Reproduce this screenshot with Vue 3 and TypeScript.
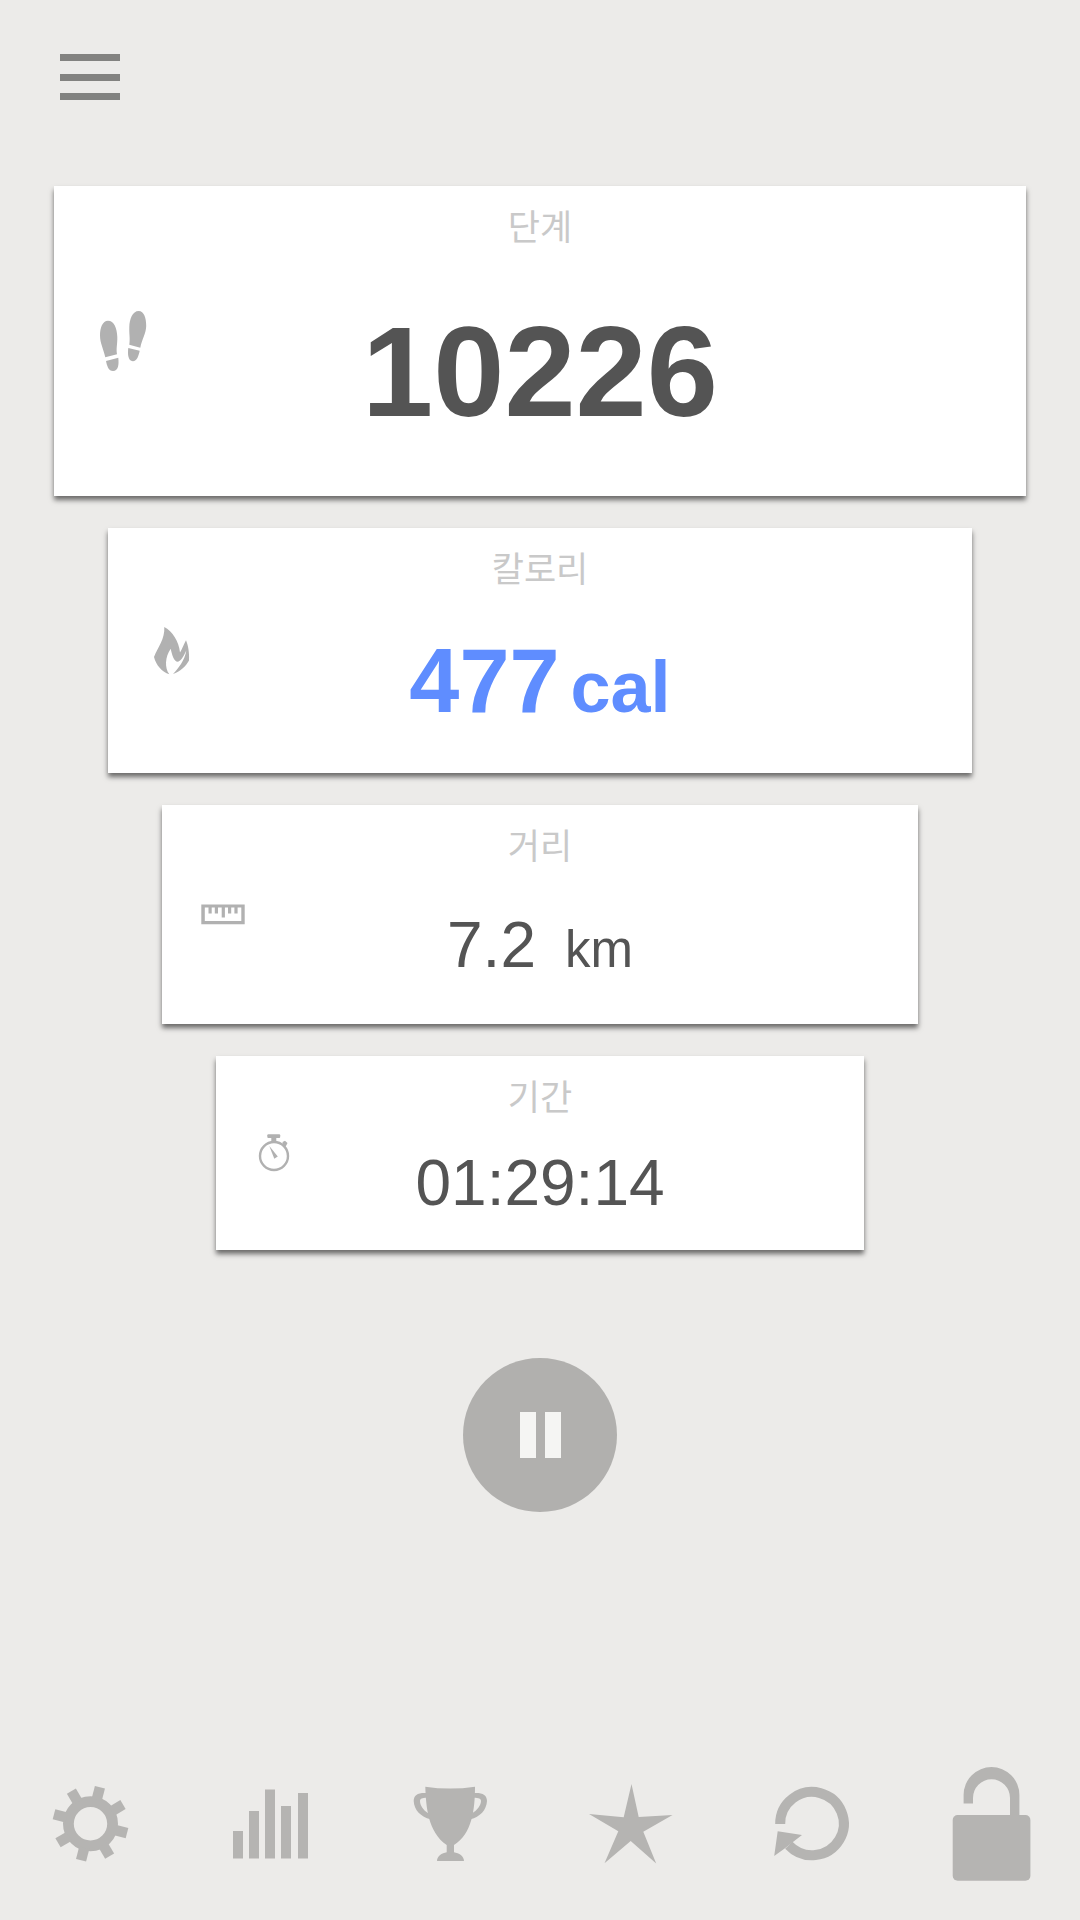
<script setup lang="ts">
import { ref } from 'vue'

type IconName = 'steps' | 'flame' | 'ruler' | 'watch'

interface Metric {
  id: string
  icon: IconName
  iconSize: number
  label: string
  value: string
  unit?: string
}

const metrics: Metric[] = [
  { id: 'steps', icon: 'steps', iconSize: 60, label: '단계', value: '10226' },
  { id: 'calories', icon: 'flame', iconSize: 48, label: '칼로리', value: '477', unit: 'cal' },
  { id: 'distance', icon: 'ruler', iconSize: 44, label: '거리', value: '7.2', unit: 'km' },
  { id: 'duration', icon: 'watch', iconSize: 38, label: '기간', value: '01:29:14' },
]

const gearTeeth = Array.from({ length: 8 }, (_, i) => 14.5 + i * 45)
const running = ref(true)
</script>

<template>
  <div class="screen">
    <header class="top">
      <button type="button" class="icon-button" aria-label="메뉴">
        <svg class="menu" viewBox="0 0 60 46" aria-hidden="true">
          <path d="M0 0H60V7H0zM0 20H60V27H0zM0 39H60V46H0z" />
        </svg>
      </button>
    </header>

    <main class="content">
      <section v-for="m in metrics" :key="m.id" class="card" :class="m.id">
        <svg
          class="card-icon"
          :width="m.iconSize"
          :height="m.iconSize"
          :viewBox="`0 0 ${m.iconSize} ${m.iconSize}`"
          aria-hidden="true"
        >
          <g v-if="m.icon === 'steps'">
            <path d="M15 9.7C9.500 9.700 7 17 7 24.500C7 32 10.500 38 12.300 46.300L24 43.300C23 37 24.500 33 24.300 26C24 17 21 9.700 15 9.700z" />
            <path d="M13 50L25.300 46.700C26 53 25.500 60 20 60C15.500 60 14 55 13 50z" />
            <path d="M45.700 0C39.500 0 36.500 8 36.300 16C36 23 37.300 27 36.300 33.700L47.300 36.700C49 28 53 23 53.200 15C53.300 7 51 0 45.700 0z" />
            <path d="M35.300 37L46.700 39.700C45.500 45 44 50 39.800 50.200C35 50 34.500 43 35.300 37z" />
          </g>
          <path
            v-else-if="m.icon === 'flame'"
            d="M17.300 0C18 12 11 20 7 30C9 38 15 45 22.300 47.300C17.500 41 18 30 23.700 21.800C25 28 27 35 31 34.800C35 33.500 37 28 39.300 23.500C38 33 31 42 26 47C33 45 39 39 42 33.500C42.500 25 41 18 39 13.200C37 17 35 22 33 25.500C32 14 25 4 17.300 0z"
          />
          <g v-else-if="m.icon === 'ruler'">
            <path fill-rule="evenodd" d="M.3 11.500H43.700V31.300H.3zM3.800 14.500V28H40.300V14.500z" />
            <path d="M7.500 14h3.200v6.500H7.500zM13.800 14h3.200v6.500h-3.200zM20.700 14h3.200v10.500h-3.200zM27 14h3.200v6.500H27zM33.400 14h3.200v6.500h-3.200z" />
          </g>
          <g v-else>
            <circle cx="19" cy="22" r="14" fill="none" stroke="#b1b1b1" stroke-width="2.400" />
            <rect x="12.300" y=".2" width="12.900" height="3.800" rx="1" />
            <path d="M16.300 4H21.300V8H16.300z" />
            <path d="M27.500 8L30 6.800L32.500 9L31.500 11L30.300 13L27.800 10.800z" />
            <path d="M14.300 12L22.800 22.600L19.300 24.800z" />
          </g>
        </svg>
        <div class="card-body">
          <h2 class="label">{{ m.label }}</h2>
          <p class="value">
            <span>{{ m.value }}</span>
            <span v-if="m.unit" class="unit">{{ m.unit }}</span>
          </p>
        </div>
      </section>

      <button
        type="button"
        class="pause"
        :aria-label="running ? '일시정지' : '시작'"
        @click="running = !running"
      >
        <svg width="154" height="154" viewBox="0 0 154 154" aria-hidden="true">
          <path v-if="running" d="M57 54H73V100H57zM82 54H98V100H82z" />
          <path v-else d="M60 52L100 77L60 102z" />
        </svg>
      </button>
    </main>

    <nav class="tools" aria-label="도구">
      <button type="button" class="icon-button" aria-label="설정">
        <svg viewBox="0 0 120 120" aria-hidden="true">
          <circle cx="60.500" cy="59.700" r="22.100" fill="none" stroke="#b5b4b2" stroke-width="10.800" />
          <rect
            v-for="a in gearTeeth"
            :key="a"
            x="55.300"
            y="22"
            width="10.400"
            height="13"
            :transform="`rotate(${a} 60.500 59.700)`"
          />
        </svg>
      </button>
      <button type="button" class="icon-button" aria-label="통계">
        <svg viewBox="0 0 120 120" aria-hidden="true">
          <path d="M23 67h10v27.500H23zM39 47h10v47.500H39zM55 25.500h10v69H55zM71 42h10v52.500H71zM88 29h10v65.500H88z" />
        </svg>
      </button>
      <button type="button" class="icon-button" aria-label="업적">
        <svg viewBox="0 0 120 120" aria-hidden="true">
          <path d="M35.300 22.700Q60 26.500 85 22.700C85 45 82 70 64 81V88.200C69 89 74 92 74 97H47C47 92 52 89 56.700 88.200V81C38 68 36 43 35.300 22.700z" />
          <path d="M36.500 29C28 28.500 23.700 31 23.700 37C24 46 31 53 40.500 55.300L38.500 49.500C33 46 30 41 30 37C30 34.500 32 33.700 37 33.700z" />
          <path d="M84 29C92.500 28.500 97 31 97 37C96.500 46 90 53 80.500 55.300L82 49.500C87.500 46 91 41 91 37C91 34.500 89 33.700 83.500 33.700z" />
        </svg>
      </button>
      <button type="button" class="icon-button" aria-label="즐겨찾기">
        <svg viewBox="0 0 120 120" aria-hidden="true">
          <path d="M61.500 20L68.700 53L102.500 51L73.300 67.700L86.200 99.500L60.700 77L34.500 99.200L48.300 67.300L19 50L53.700 53.300z" />
        </svg>
      </button>
      <button type="button" class="icon-button" aria-label="초기화">
        <svg viewBox="0 0 120 120" aria-hidden="true">
          <path d="M30.200 60A31.800 31.600 0 1 1 38.800 81.200" fill="none" stroke="#b5b4b2" stroke-width="10" />
          <path d="M27.700 67.300L52 71L43.300 77.700L34.300 84.700L24.200 92z" />
        </svg>
      </button>
      <button type="button" class="icon-button" aria-label="잠금 해제">
        <svg viewBox="0 0 120 120" aria-hidden="true">
          <rect x="22.700" y="51" width="77.700" height="65.800" rx="5" />
          <path d="M33.600 39.500V31A27.900 28 0 0 1 89.400 31V53H80V34A18.500 18.700 0 0 0 43 34V39.500z" />
        </svg>
      </button>
    </nav>
  </div>
</template>

<style>
body {
  margin: 0;
  background: #ecebe9;
}
</style>

<style scoped>
.screen {
  display: flex;
  flex-direction: column;
  min-height: 100vh;
  background: #ecebe9;
  color: #545454;
  font-family: 'Liberation Sans', 'Noto Sans CJK KR', sans-serif;
}

button {
  padding: 0;
  border: 0;
  background: none;
  cursor: pointer;
}

svg {
  display: block;
}

.top {
  display: flex;
  padding: 54px 60px 86px;
}

.menu {
  width: 60px;
  height: 46px;
  fill: #828280;
}

.content {
  display: flex;
  flex-direction: column;
  align-items: center;
  gap: 32px;
}

.card {
  display: grid;
  align-items: center;
  box-sizing: border-box;
  background: #fff;
  box-shadow: 0 4px 5px rgba(0, 0, 0, 0.55);
}

.card-icon,
.card-body {
  grid-area: 1 / 1;
}

.card-icon {
  margin-left: 39px;
  fill: #b1b1b1;
}

.card-body {
  padding-bottom: 17px;
  text-align: center;
}

.label {
  margin: 0;
  color: #c9c9c9;
  font-family: 'Noto Sans CJK KR', sans-serif;
  font-size: 35px;
  font-weight: 400;
  line-height: 78px;
}

.value {
  display: flex;
  justify-content: center;
  align-items: baseline;
  margin: 0;
}

.unit {
  line-height: 1;
}

.steps {
  width: 90%;
}

.steps .value {
  font-size: 128px;
  font-weight: 700;
  line-height: 215px;
}

.calories {
  width: 80%;
}

.calories .value {
  gap: 11px;
  color: #5f8dff;
  font-size: 90px;
  font-weight: 700;
  line-height: 150px;
}

.calories .unit {
  font-size: 72px;
}

.distance {
  width: 70%;
}

.distance .value {
  gap: 29px;
  font-size: 64px;
  line-height: 124px;
}

.distance .unit {
  font-size: 51px;
}

.duration {
  width: 60%;
}

.duration .value {
  font-size: 64px;
  line-height: 99px;
}

.pause {
  margin-top: 76px;
  border-radius: 50%;
  background: #b1b0ae;
  fill: #f5f5f3;
}

.tools {
  display: grid;
  grid-template-columns: repeat(6, 1fr);
  align-items: center;
  justify-items: center;
  height: 192px;
  margin-top: auto;
}

.tools svg {
  width: 120px;
  height: 120px;
  fill: #b5b4b2;
}
</style>
